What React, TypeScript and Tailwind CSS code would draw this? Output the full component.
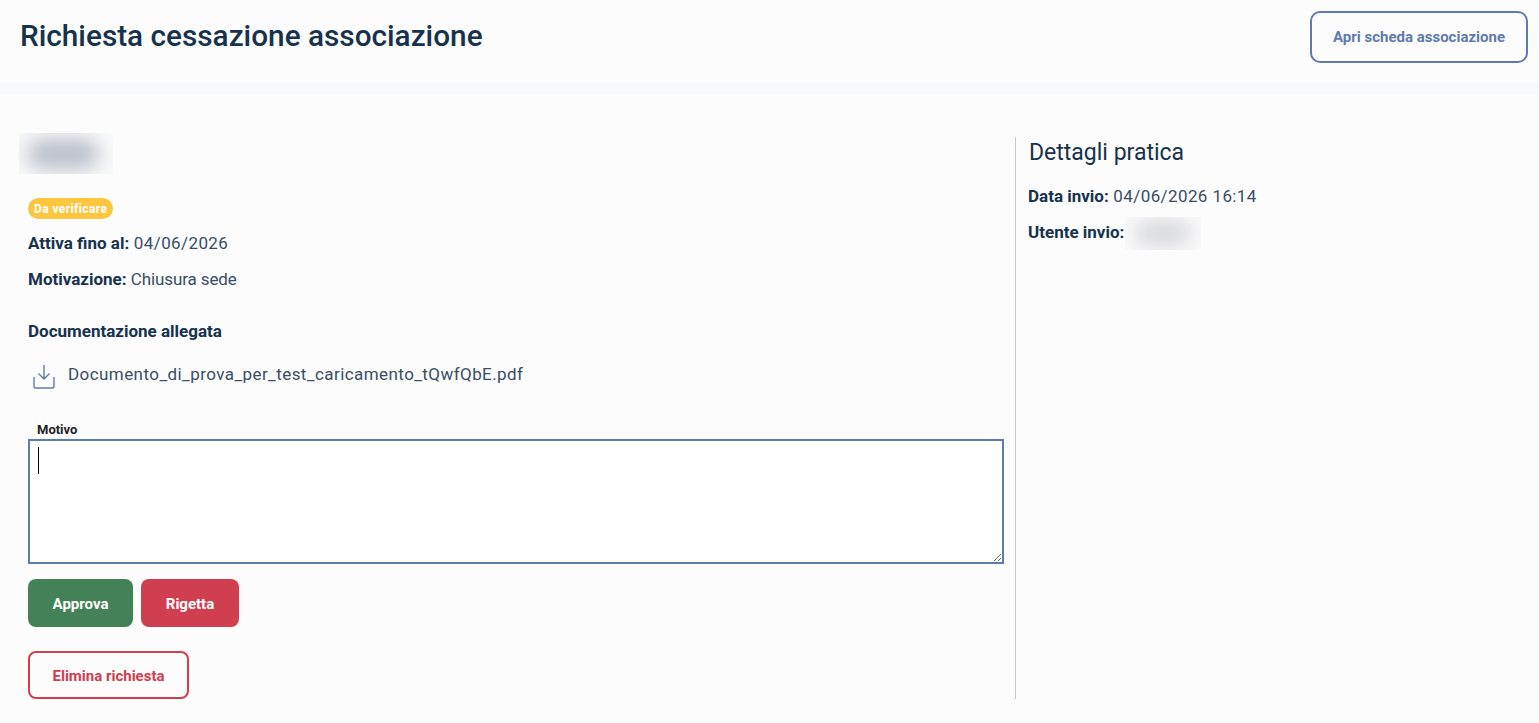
import React from 'react';

const font = { fontFamily: 'Roboto, "Liberation Sans", sans-serif' };

function Blur({ className, blobClassName }: { className: string; blobClassName: string }) {
    return (
        <div className={`overflow-hidden bg-[#fafafb] flex items-center justify-center ${className}`}>
            <div className={`blur-[10px] rounded-full ${blobClassName}`} />
        </div>
    );
}

export default function App() {
    return (
        <div style={font} className="min-h-[723px] bg-[#fcfcfd] text-[#17324d]">
            {/* Header */}
            <div className="h-[83px] pl-[20px] pr-[11px] pt-[11px] flex items-start justify-between">
                <h1 className="text-[29.75px] leading-[50px] font-medium">Richiesta cessazione associazione</h1>
                <button className="w-[218px] h-[52px] rounded-[10px] border-2 border-[#5f7aae] text-[#5f7aae] text-[15px] font-bold">
                    Apri scheda associazione
                </button>
            </div>
            <div className="h-[11px] bg-[#f8f9fb]" />

            <div className="flex pt-[43px]">
                {/* Main column */}
                <div className="w-[1015px] h-[562px] pl-[28px] pr-[12px] shrink-0">
                    <Blur className="w-[94px] h-[41px] -ml-[9px] -mt-[4px] pr-[6px]" blobClassName="w-[72px] h-[30px] bg-[#b8bdc8]" />
                    <div className="mt-[24px] inline-flex h-[21px] items-center rounded-full bg-[#fcc73f] px-[6px] text-[12px] tracking-[0.4px] font-bold text-white align-top">
                        Da verificare
                    </div>
                    <p className="mt-[11px] text-[17px] leading-[26px] tracking-[0.4px] text-[#3a4d63]">
                        <span className="font-bold text-[#17324d] tracking-normal">Attiva fino al:</span> 04/06/2026
                    </p>
                    <p className="mt-[10px] text-[17px] leading-[26px] tracking-[-0.1px] text-[#3a4d63]">
                        <span className="font-bold text-[#17324d] tracking-normal">Motivazione:</span> Chiusura sede
                    </p>
                    <p className="mt-[26px] text-[17px] leading-[26px] font-bold">Documentazione allegata</p>
                    <div className="mt-[15px] h-[32px] flex items-center gap-[13px] pl-[5px]">
                        <svg width="22" height="26" viewBox="0 0 22 26" fill="none" stroke="#5f7aae" strokeWidth="1.4" className="shrink-0 mt-[3px]">
                            <path d="M11 1v14M5.500 9.500 11 15l5.500-5.500" />
                            <path d="M1 13v9.500a1.500 1.500 0 0 0 1.500 1.500h17a1.500 1.500 0 0 0 1.500-1.500V13" />
                        </svg>
                        <span className="text-[17px] tracking-[0.43px] text-[#3a4d63]">Documento_di_prova_per_test_caricamento_tQwfQbE.pdf</span>
                    </div>
                    <label className="block mt-[31px] ml-[9px] text-[13px] leading-[16px] font-bold text-[#222]">Motivo</label>
                    <div className="relative mt-[1px] h-[125px] w-[976px]">
                        <textarea className="block w-full h-full border-2 border-[#5f7aae] bg-white outline-none resize-y" />
                        <div className="absolute left-[10px] top-[8px] h-[27px] w-px bg-black" />
                    </div>
                    <div className="mt-[15px] flex gap-[8px]">
                        <button className="w-[105px] h-[48px] pt-[2px] rounded-[8px] bg-[#438156] text-white text-[15px] font-bold">Approva</button>
                        <button className="w-[98px] h-[48px] pt-[2px] rounded-[8px] bg-[#cf3f4f] text-white text-[15px] font-bold">Rigetta</button>
                    </div>
                    <button className="mt-[24px] w-[161px] h-[48px] pt-[2px] rounded-[8px] border-2 border-[#cf3f4f] text-[#cf3f4f] text-[15px] font-bold">
                        Elimina richiesta
                    </button>
                </div>

                {/* Side column */}
                <div className="flex-1 h-[562px] border-l border-[#c8c8c8] pl-[13px]">
                    <h2 className="text-[23px] leading-[30px] pt-px text-[#17324d]">Dettagli pratica</h2>
                    <p className="mt-[15px] -ml-px text-[17px] leading-[26px] tracking-[0.4px] text-[#3a4d63]">
                        <span className="font-bold text-[#17324d] tracking-normal">Data invio:</span> 04/06/2026 16:14
                    </p>
                    <div className="mt-[11px] -ml-px h-[26px] flex items-center text-[17px] font-bold">
                        <span>Utente invio:</span>
                        <Blur className="w-[76px] h-[33px] ml-[1px]" blobClassName="w-[56px] h-[22px] bg-[#d2d3d6]" />
                    </div>
                </div>
            </div>
        </div>
    );
}
